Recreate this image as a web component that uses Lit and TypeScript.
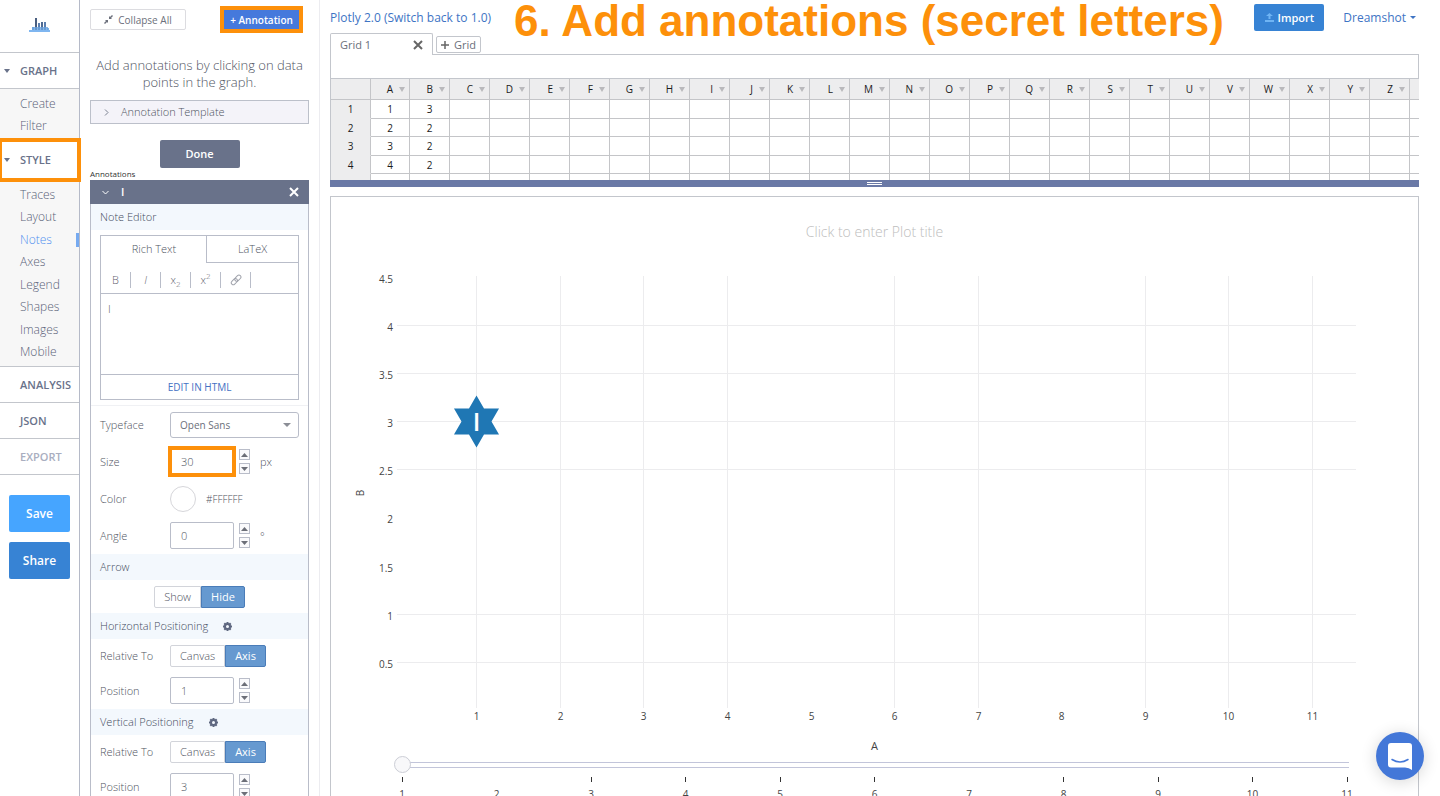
import { LitElement, html, svg, css } from "lit";
import { customElement, property, state } from "lit/decorators.js";
import { classMap } from "lit/directives/class-map.js";

const base = css`
  * {
    box-sizing: border-box;
  }
  button,
  input,
  select,
  textarea {
    font: inherit;
    color: inherit;
    margin: 0;
    padding: 0;
    border: 0;
    border-radius: 0;
    background: none;
  }
  button {
    cursor: pointer;
  }
  a {
    text-decoration: none;
    color: inherit;
  }
  ul {
    list-style: none;
    margin: 0;
    padding: 0;
  }
`;

@customElement("side-nav")
class SideNav extends LitElement {
  static styles = [
    base,
    css`
      :host {
        display: block;
        border-right: 1px solid #b5bac8;
        background: #fff;
        color: #5a6278;
        font-size: 12px;
        line-height: 18px;
      }
      .logo {
        display: flex;
        justify-content: center;
        height: 53px;
        padding-top: 18px;
        border-bottom: 1px solid #c3c6cc;
      }
      .head {
        display: flex;
        align-items: center;
        width: 100%;
        height: 36px;
        padding-left: 20px;
        border-bottom: 1px solid #c3c6cc;
        font-size: 11px;
        font-weight: 600;
        color: #69728a;
        background: #fff;
        position: relative;
      }
      .head.marked {
        height: 40px;
        border-bottom: 0;
        outline: 4px solid #fd900a;
        outline-offset: -2px;
        z-index: 1;
      }
      .head.off {
        color: #a9aec0;
      }
      .arrow {
        position: absolute;
        left: 4px;
      }
      .items {
        display: flex;
        flex-direction: column;
        justify-content: space-between;
        padding: 6px 0 5px;
        background: #f7f7f7;
        min-height: 51px;
        font-weight: 300;
      }
      .items.long {
        min-height: 187px;
        border-bottom: 1px solid #c3c6cc;
      }
      .items a {
        display: block;
        padding-left: 20px;
      }
      .items a.on {
        color: #4f8ff0;
        background: linear-gradient(#76aaf0, #76aaf0) right center / 3px 14px no-repeat;
      }
      .actions {
        display: flex;
        flex-direction: column;
        gap: 10px;
        padding: 20px 9px;
      }
      .actions button {
        height: 37px;
        border-radius: 2px;
        color: #fff;
        font-size: 12px;
        font-weight: 600;
        background: #3783d4;
      }
      .actions .save {
        background: #46a5ff;
      }
    `,
  ];

  private heading(label: string, open: boolean, extra = "") {
    return html`<button class="head ${extra}">
      ${open
        ? html`<svg class="arrow" width="6" height="4" viewBox="0 0 6 4"><path d="M0 0H6L3 4Z" fill="#69728a" /></svg>`
        : ""}
      ${label}
    </button>`;
  }

  render() {
    const style = ["Traces", "Layout", "Notes", "Axes", "Legend", "Shapes", "Images", "Mobile"];
    const bars: [number, number, string][] = [
      [3, 5, "#6a9fd8"],
      [6, 14, "#4a5f80"],
      [9, 9, "#5b7fb0"],
      [12, 10, "#4f6b94"],
      [15, 10, "#5b7fb0"],
      [18, 4, "#7ab2ea"],
    ];
    return html`
      <a class="logo" href="#" aria-label="Home">
        <svg width="21" height="15" viewBox="0 0 21 15">
          ${bars.map(([x, h, c]) => svg`<rect x=${x} y=${14 - h} width="2" height=${h} fill=${c} />`)}
          <rect x="3" y="9" width="16" height="4" fill="#6aa4e0" fill-opacity="0.8" />
          <rect x="0" y="12" width="21" height="2" fill="#7fb6f0" />
        </svg>
      </a>
      <nav>
        ${this.heading("GRAPH", true)}
        <ul class="items">
          <li><a href="#">Create</a></li>
          <li><a href="#">Filter</a></li>
        </ul>
        ${this.heading("STYLE", true, "marked")}
        <ul class="items long">
          ${style.map((s) => html`<li><a href="#" class=${classMap({ on: s === "Notes" })}>${s}</a></li>`)}
        </ul>
        ${this.heading("ANALYSIS", false)} ${this.heading("JSON", false)} ${this.heading("EXPORT", false, "off")}
      </nav>
      <div class="actions">
        <button class="save">Save</button>
        <button>Share</button>
      </div>
    `;
  }
}

@customElement("number-field")
class NumberField extends LitElement {
  @property() label = "";
  @property() value = "";
  @property() unit = "";
  @property({ type: Boolean }) marked = false;

  static styles = [
    base,
    css`
      :host {
        display: flex;
        align-items: center;
        height: 37px;
      }
      label {
        width: 70px;
      }
      input {
        width: 64px;
        height: 27px;
        padding-left: 10px;
        border: 1px solid #b9bdc9;
        border-radius: 2px;
      }
      input.marked {
        outline: 4px solid #fd900a;
        outline-offset: -2px;
        border-color: #fff;
        border-radius: 0;
      }
      .steps {
        display: flex;
        flex-direction: column;
        gap: 3px;
        margin: 0 10px 0 5px;
      }
      .steps button {
        display: flex;
        align-items: center;
        justify-content: center;
        width: 11px;
        height: 11px;
        border: 1px solid #b9bdc9;
        background: #fafafc;
      }
    `,
  ];

  render() {
    return html`
      <label for="field">${this.label}</label>
      <input id="field" class=${classMap({ marked: this.marked })} .value=${this.value} />
      <span class="steps">
        <button aria-label="Increase">
          <svg width="7" height="4" viewBox="0 0 7 4"><path d="M0 4L3.5 0L7 4Z" fill="#6c6f78" /></svg>
        </button>
        <button aria-label="Decrease">
          <svg width="7" height="4" viewBox="0 0 7 4"><path d="M0 0L3.5 4L7 0Z" fill="#6c6f78" /></svg>
        </button>
      </span>
      <span>${this.unit}</span>
    `;
  }
}

@customElement("choice-row")
class ChoiceRow extends LitElement {
  @property() label = "";
  @property({ attribute: false }) options: string[] = [];

  static styles = [
    base,
    css`
      :host {
        display: block;
      }
      .row {
        display: flex;
        align-items: center;
        justify-content: center;
        height: 33px;
        margin: 0;
        padding: 0;
        border: 0;
      }
      .row.labelled {
        justify-content: flex-start;
      }
      .name {
        width: 70px;
      }
      .option {
        position: relative;
        display: block;
      }
      .option input {
        position: absolute;
        inset: 0;
        opacity: 0;
      }
      .option span {
        display: block;
        height: 22px;
        padding: 0 9px;
        border: 1px solid #d2d4da;
        line-height: 20px;
        border-radius: 2px 0 0 2px;
      }
      .option:last-child span {
        border-radius: 0 2px 2px 0;
      }
      .option input:checked + span {
        color: #fff;
        background: #6699d0;
        border-color: #4a7cb8;
        font-weight: 400;
      }
    `,
  ];

  render() {
    return html`<div
      class=${classMap({ row: true, labelled: !!this.label })}
      role="radiogroup"
      aria-label=${this.label || "Arrow"}
    >
      ${this.label ? html`<span class="name">${this.label}</span>` : ""}
      ${this.options.map(
        (o, i) => html`<label class="option"
          ><input type="radio" name="choice" ?checked=${i === 1} /><span>${o}</span></label
        >`
      )}
    </div>`;
  }
}

const gear = html`<svg width="9" height="9" viewBox="0 0 18 18">
  <circle cx="9" cy="9" r="5" fill="none" stroke="#5f6880" stroke-width="4" />
  <path
    d="M9 0V4M9 14V18M0 9H4M14 9H18M2.6 2.6L5.5 5.5M12.5 12.5L15.4 15.4M2.6 15.4L5.5 12.5M12.5 5.5L15.4 2.6"
    stroke="#5f6880"
    stroke-width="4"
  />
</svg>`;

@customElement("notes-panel")
class NotesPanel extends LitElement {
  static styles = [
    base,
    css`
      :host {
        display: block;
        padding: 9px 10px 0;
        border-right: 1px solid #ececf0;
        color: #4f5462;
        font-size: 11px;
        font-weight: 300;
        line-height: 16px;
      }
      .top {
        display: flex;
        justify-content: space-between;
        align-items: center;
        padding-right: 10px;
        height: 21px;
      }
      .collapse {
        display: flex;
        align-items: center;
        justify-content: center;
        gap: 5px;
        width: 96px;
        height: 21px;
        border: 1px solid #dcdce0;
        border-radius: 2px;
        font-size: 10px;
        font-weight: 400;
        color: #6b6f7b;
      }
      .add {
        width: 75px;
        height: 19px;
        background: #4579dc;
        color: #fff;
        font-size: 10px;
        font-weight: 600;
        outline: 4px solid #fd900a;
      }
      .hint {
        margin: 27px 0 9px;
        font-size: 13px;
        line-height: 17px;
        text-align: center;
      }
      .template {
        display: flex;
        align-items: center;
        gap: 12px;
        width: 100%;
        height: 24px;
        padding-left: 13px;
        border: 1px solid #bcc0ca;
        background: #f4f3f9;
      }
      .done {
        display: block;
        width: 80px;
        height: 28px;
        margin: 16px auto 0;
        border-radius: 2px;
        background: #69728a;
        color: #fff;
        font-size: 11px;
        font-weight: 600;
      }
      .caption {
        font-size: 8px;
        font-weight: 400;
        line-height: 12px;
        color: #333;
      }
      .bar {
        display: flex;
        align-items: center;
        height: 24px;
        padding: 0 10px 0 12px;
        background: #69728a;
        color: #fff;
      }
      .bar .name {
        flex: 1;
        padding-left: 12px;
        font-weight: 600;
      }
      .bar button {
        display: flex;
      }
      .fold {
        border: 1px solid #b9bdc9;
        border-width: 0 1px;
      }
      .section {
        display: flex;
        align-items: center;
        gap: 15px;
        height: 26px;
        margin: 0;
        padding: 0 9px;
        background: #f3f8fd;
        color: #434b60;
        font-size: 11px;
        font-weight: 300;
      }
      .group {
        padding: 0 9px;
      }
      .group.first {
        border-top: 1px solid #f0f1f4;
      }
      .editor {
        margin: 5px 9px 5px;
        border: 1px solid #b9bdc9;
      }
      .tabs {
        display: flex;
        height: 27px;
      }
      .tabs button {
        flex: 1;
        border: 1px solid #b9bdc9;
        border-width: 0 0 1px 1px;
      }
      .tabs .on {
        flex-basis: 14px;
        border-color: transparent;
      }
      .tools {
        display: flex;
        align-items: center;
        height: 31px;
        padding-top: 4px;
        border-bottom: 1px solid #b9bdc9;
        color: #5f636e;
      }
      .tools button {
        display: flex;
        align-items: center;
        justify-content: center;
        width: 30px;
        height: 16px;
        border-right: 1px solid #b9bdc9;
      }
      .low {
        font-size: 8px;
        line-height: 8px;
        align-self: flex-end;
      }
      .high {
        font-size: 8px;
        line-height: 8px;
        align-self: flex-start;
      }
      textarea {
        display: block;
        width: 100%;
        height: 81px;
        padding: 7px;
        border-bottom: 1px solid #b9bdc9;
        resize: none;
      }
      .html {
        display: block;
        width: 100%;
        height: 24px;
        color: #4472c4;
        font-size: 10px;
        font-weight: 400;
      }
      .row {
        display: flex;
        align-items: center;
        height: 37px;
      }
      .row label {
        width: 70px;
      }
      .select {
        position: relative;
        flex: 1;
        display: flex;
      }
      select {
        flex: 1;
        height: 26px;
        padding-left: 9px;
        border: 1px solid #b9bdc9;
        border-radius: 3px;
        appearance: none;
        font-size: 10px;
        font-weight: 400;
        color: #6b6f7b;
      }
      .select svg {
        position: absolute;
        right: 8px;
        top: 11px;
        pointer-events: none;
      }
      .swatch {
        width: 26px;
        height: 26px;
        margin-right: 10px;
        border: 1px solid #d6d6da;
        border-radius: 50%;
        background: #fff;
      }
      .hex {
        font-size: 10px;
      }
    `,
  ];

  render() {
    return html`
      <div class="top">
        <button class="collapse">
          <svg width="9" height="9" viewBox="0 0 18 18">
            <path d="M10 8V2L12 4L16 0L18 2L14 6L16 8ZM8 10V16L6 14L2 18L0 16L4 12L2 10Z" fill="#6b6f7b" />
          </svg>
          Collapse All
        </button>
        <button class="add">+ Annotation</button>
      </div>
      <p class="hint">Add annotations by clicking on data points in the graph.</p>
      <button class="template">
        <svg width="5" height="7" viewBox="0 0 5 7"><path d="M1 .5L4 3.5L1 6.5" fill="none" stroke="#7b8090" /></svg>
        Annotation Template
      </button>
      <button class="done">Done</button>
      <div class="caption">Annotations</div>
      <div class="bar">
        <svg width="7" height="5" viewBox="0 0 7 5"><path d="M.5 1L3.5 4L6.5 1" fill="none" stroke="#fff" /></svg>
        <span class="name">I</span>
        <button aria-label="Remove annotation">
          <svg width="10" height="10" viewBox="0 0 10 10">
            <path d="M1 1L9 9M9 1L1 9" stroke="#fff" stroke-width="2" />
          </svg>
        </button>
      </div>
      <div class="fold">
        <h3 class="section">Note Editor</h3>
        <div class="editor">
          <div class="tabs"><button class="on">Rich Text</button><button>LaTeX</button></div>
          <div class="tools">
            <button>B</button>
            <button><i>I</i></button>
            <button>x<span class="low">2</span></button>
            <button>x<span class="high">2</span></button>
            <button aria-label="Link">
              <svg width="12" height="12" viewBox="0 0 12 12" fill="none" stroke="#a0a3ac">
                <rect x="-3" y="-2" width="7" height="4" rx="2" transform="translate(4 8) rotate(-45)" />
                <rect x="-3" y="-2" width="7" height="4" rx="2" transform="translate(7.500 4.500) rotate(-45)" />
              </svg>
            </button>
          </div>
          <textarea aria-label="Note text" .value=${"I"}></textarea>
          <button class="html">EDIT IN HTML</button>
        </div>
        <div class="group first">
          <div class="row">
            <label for="face">Typeface</label>
            <span class="select">
              <select id="face"><option>Open Sans</option></select>
              <svg width="8" height="4" viewBox="0 0 8 4"><path d="M0 0H8L4 4Z" fill="#8b8e96" /></svg>
            </span>
          </div>
          <number-field label="Size" value="30" unit="px" marked></number-field>
          <div class="row">
            <label for="swatch">Color</label>
            <button id="swatch" class="swatch" aria-label="Color"></button>
            <span class="hex">#FFFFFF</span>
          </div>
          <number-field label="Angle" value="0" unit="°"></number-field>
        </div>
        <h3 class="section">Arrow</h3>
        <div class="group"><choice-row .options=${["Show", "Hide"]}></choice-row></div>
        ${[
          ["Horizontal Positioning", "1"],
          ["Vertical Positioning", "3"],
        ].map(
          ([title, value]) => html`
            <h3 class="section">${title} ${gear}</h3>
            <div class="group">
              <choice-row label="Relative To" .options=${["Canvas", "Axis"]}></choice-row>
              <number-field label="Position" value=${value}></number-field>
            </div>
          `
        )}
      </div>
    `;
  }
}

@customElement("data-grid")
class DataGrid extends LitElement {
  static styles = [
    base,
    css`
      :host {
        display: block;
        font-size: 10px;
        color: #1c1c1c;
      }
      .tabs {
        display: flex;
        align-items: flex-end;
        gap: 3px;
        color: #6b6f7b;
        font-size: 11px;
      }
      .tab {
        display: flex;
        align-items: center;
        justify-content: space-between;
        width: 103px;
        height: 22px;
        margin-bottom: -1px;
        padding: 0 9px;
        border: 1px solid #c3c6cc;
        border-bottom: 0;
        background: #fff;
        border-radius: 2px 2px 0 0;
        z-index: 1;
      }
      .tab button {
        display: flex;
      }
      .new {
        display: flex;
        align-items: center;
        gap: 5px;
        height: 17px;
        margin-bottom: 1px;
        padding: 0 4px;
        border: 1px solid #c3c6cc;
        border-radius: 2px;
      }
      .formula {
        height: 24px;
        border: 1px solid #c3c6cc;
        border-bottom: 0;
      }
      .scroll {
        height: 102px;
        overflow: hidden;
        border-left: 1px solid #c3c6cc;
      }
      table {
        width: 100%;
        table-layout: fixed;
        border-collapse: separate;
        border-spacing: 0;
        border-top: 1px solid #c3c6cc;
      }
      th,
      td {
        width: 40px;
        height: 19px;
        padding: 0;
        border: 1px solid #c4c5c8;
        border-width: 0 1px 1px 0;
        font-weight: 400;
        line-height: 14px;
        text-align: center;
      }
      th:nth-child(2) {
        width: 39px;
      }
      th:last-child,
      td:last-child {
        width: auto;
        border-right: 0;
      }
      thead th {
        height: 21px;
        background: #ededee;
      }
      tbody th {
        background: #ededee;
        border-bottom-color: #ededee;
      }
      tbody tr:nth-child(even) > * {
        height: 18px;
      }
      .col {
        display: flex;
        align-items: center;
        justify-content: flex-end;
        gap: 6px;
        padding-right: 4px;
      }
      .splitter {
        display: flex;
        flex-direction: column;
        align-items: center;
        height: 7px;
        padding-top: 2px;
        gap: 1px;
        background: #6a79a6;
      }
      .splitter i {
        width: 15px;
        height: 1px;
        background: #fff;
      }
    `,
  ];

  render() {
    const letters = "ABCDEFGHIJKLMNOPQRSTUVWXYZ".split("");
    const rows = [["1", "3"], ["2", "2"], ["3", "2"], ["4", "2"], []];
    return html`
      <div class="tabs">
        <div class="tab">
          Grid 1
          <button aria-label="Close grid">
            <svg width="10" height="10" viewBox="0 0 10 10"><path d="M1 1L9 9M9 1L1 9" stroke="#666" stroke-width="2" /></svg>
          </button>
        </div>
        <button class="new">
          <svg width="8" height="8" viewBox="0 0 8 8"><path d="M4 0V8M0 4H8" stroke="#666" stroke-width="1.500" /></svg>
          Grid
        </button>
      </div>
      <div class="formula"></div>
      <div class="scroll">
        <table>
          <thead>
            <tr>
              <th></th>
              ${letters.map(
                (l) => html`<th>
                  <span class="col"
                    >${l}<svg width="6" height="5" viewBox="0 0 6 5"><path d="M0 0H6L3 5Z" fill="#b9b9bc" /></svg
                  ></span>
                </th>`
              )}
              <th></th>
            </tr>
          </thead>
          <tbody>
            ${rows.map(
              (r, i) => html`<tr>
                <th>${r.length ? i + 1 : ""}</th>
                ${letters.map((_, c) => html`<td>${r[c] ?? ""}</td>`)}
                <td></td>
              </tr>`
            )}
          </tbody>
        </table>
      </div>
      <div class="splitter"><i></i><i></i></div>
    `;
  }
}

@customElement("plot-view")
class PlotView extends LitElement {
  @state() private w = 1087;
  private watcher = new ResizeObserver(([e]) => (this.w = e.contentRect.width));

  connectedCallback() {
    super.connectedCallback();
    this.watcher.observe(this);
  }
  disconnectedCallback() {
    this.watcher.disconnect();
    super.disconnectedCallback();
  }

  static styles = [
    base,
    css`
      :host {
        display: block;
        border: 1px solid #c3c6cc;
        border-bottom: 0;
        color: #444;
        font-size: 10px;
      }
      svg {
        display: block;
        width: 100%;
        height: 556px;
        fill: #444;
      }
      .grid {
        stroke: #ececee;
        shape-rendering: crispEdges;
      }
      .x {
        text-anchor: middle;
      }
      .y {
        text-anchor: end;
      }
      .title {
        text-anchor: middle;
        font-size: 14px;
        font-weight: 300;
        fill: #bdbdbd;
      }
      .note {
        text-anchor: middle;
        font-size: 25px;
        font-weight: 600;
        fill: #fff;
      }
      .axis {
        text-anchor: middle;
        font-size: 11px;
      }
      .slide {
        margin: 3px 69px 0 63px;
      }
      .slide input {
        display: block;
        width: 100%;
        height: 17px;
        appearance: none;
      }
      .slide input::-webkit-slider-runnable-track {
        height: 6px;
        background:
          linear-gradient(#c2c5da, #c2c5da) right top / calc(100% - 12px) 1px no-repeat,
          linear-gradient(#c2c5da, #c2c5da) right bottom / calc(100% - 12px) 1px no-repeat;
      }
      .slide input::-webkit-slider-thumb {
        appearance: none;
        width: 17px;
        height: 17px;
        margin-top: -6px;
        border: 1px solid #ccced6;
        border-radius: 50%;
        background: #f8f8fa;
      }
      .ticks {
        display: flex;
        justify-content: space-between;
        margin: 4px 61px 0 61px;
      }
      .ticks li {
        width: 20px;
        text-align: center;
        line-height: 14px;
        padding-top: 10px;
        background: linear-gradient(#333, #333) center top / 1px 5px no-repeat;
      }
      .ticks li.bare {
        background: none;
      }
    `,
  ];

  render() {
    const left = 66;
    const plotW = this.w - 128;
    const px = (v: number) => Math.round(left + (plotW * (v - 0.05)) / 11.48) + 0.5;
    const py = (v: number) => Math.round(128 + (4 - v) * 96.2) + 0.5;
    const xs = Array.from({ length: 11 }, (_, i) => i + 1);
    const ys = [4.5, 4, 3.5, 3, 2.5, 2, 1.5, 1, 0.5];
    const star = Array.from({ length: 12 }, (_, i) => {
      const r = i % 2 ? 15 : 26;
      const a = (Math.PI / 6) * i;
      return `${r * Math.sin(a)},${-r * Math.cos(a)}`;
    }).join(" ");
    return html`
      <svg role="img" aria-label="Plot of B against A">
        <text class="title" x=${this.w / 2} y="40">Click to enter Plot title</text>
        ${xs
          .filter((v) => v !== 5 && v !== 8)
          .map((v) => svg`<line class="grid" x1=${px(v)} x2=${px(v)} y1="79" y2="511" />`)}
        ${ys
          .filter((v) => v !== 4.5 && v !== 2 && v !== 1.5)
          .map((v) => svg`<line class="grid" x1=${left} x2=${left + plotW} y1=${py(v)} y2=${py(v)} />`)}
        ${xs.map((v) => svg`<text class="x" x=${px(v)} y="523">${v}</text>`)}
        ${ys.map((v) => svg`<text class="y" x="62" y=${py(v) + 5}>${v}</text>`)}
        <g transform="translate(${px(1)} ${py(3)})">
          <polygon points=${star} fill="#1f77b4" />
          <text class="note" y="9">I</text>
        </g>
        <text class="axis" x=${this.w / 2} y="553">A</text>
        <text class="x" transform="translate(33 296) rotate(-90)">B</text>
      </svg>
      <div class="slide"><input type="range" min="1" max="11" .value=${"1"} aria-label="Frame" /></div>
      <ul class="ticks">
        ${xs.map((v) => html`<li class=${classMap({ bare: v === 2 || v === 7 })}>${v}</li>`)}
      </ul>
    `;
  }
}

@customElement("app-root")
class AppRoot extends LitElement {
  static styles = [
    base,
    css`
      :host {
        display: grid;
        grid-template-columns: 80px 240px minmax(0, 1fr);
        height: 100vh;
        overflow: hidden;
        background: #fff;
        font-family: "Open Sans", "Noto Sans", sans-serif;
      }
      main {
        padding: 0 21px 0 10px;
      }
      header {
        position: relative;
        display: flex;
        align-items: center;
        height: 33px;
        padding-top: 2px;
        gap: 19px;
        color: #3e74c4;
        font-size: 12px;
      }
      .switch {
        flex: 1;
      }
      .import {
        display: flex;
        align-items: center;
        justify-content: center;
        gap: 4px;
        width: 70px;
        height: 27px;
        border-radius: 2px;
        background: #3783d4;
        color: #fff;
        font-weight: 600;
        font-size: 11px;
      }
      .user {
        display: flex;
        align-items: center;
        gap: 4px;
        padding-right: 3px;
      }
      .banner {
        position: absolute;
        left: 0;
        right: 11px;
        top: 0;
        margin: 0;
        color: #fd900a;
        font: bold 44px/42px "Liberation Sans", Arial, sans-serif;
        text-align: center;
        white-space: nowrap;
        pointer-events: none;
      }
      plot-view {
        margin-top: 9px;
      }
      .chat {
        position: fixed;
        right: 16px;
        bottom: 16px;
        display: flex;
        align-items: center;
        justify-content: center;
        width: 48px;
        height: 48px;
        border-radius: 50%;
        background: #4377d8;
        box-shadow: 0 2px 16px rgba(0, 0, 0, 0.16);
      }
    `,
  ];

  render() {
    return html`
      <side-nav></side-nav>
      <notes-panel></notes-panel>
      <main>
        <header>
          <span class="switch"><a href="#">Plotly 2.0 (Switch back to 1.0)</a></span>
          <button class="import">
            <svg width="9" height="9" viewBox="0 0 9 9">
              <path d="M4.500 0L8 3H5.500V6H3.500V3H1ZM0 7H9V9H0Z" fill="#6fb4f4" />
            </svg>
            Import
          </button>
          <a class="user" href="#"
            >Dreamshot <svg width="6" height="3" viewBox="0 0 6 3"><path d="M0 0H6L3 3Z" fill="#3e74c4" /></svg
          ></a>
          <h1 class="banner">6. Add annotations (secret letters)</h1>
        </header>
        <data-grid></data-grid>
        <plot-view></plot-view>
      </main>
      <button class="chat" aria-label="Open chat">
        <svg width="24" height="27" viewBox="0 0 24 27">
          <path d="M3 0H21Q24 0 24 3V27Q21 24.500 17 24.500H3Q0 24.500 0 21.500V3Q0 0 3 0Z" fill="#fff" />
          <path d="M4 16.500Q12 21.500 20 16.500" fill="none" stroke="#4377d8" stroke-width="1.500" stroke-linecap="round" />
        </svg>
      </button>
    `;
  }
}
